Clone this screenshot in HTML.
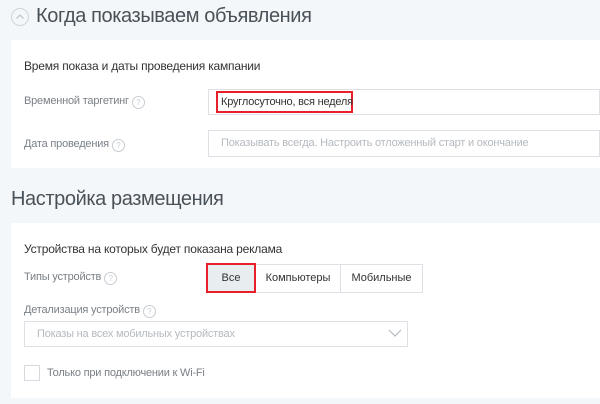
<!DOCTYPE html>
<html><head><meta charset="utf-8"><style>
body{margin:0;width:600px;height:404px;background:#f4f7f9;font-family:"Liberation Sans",sans-serif;position:relative;overflow:hidden;color:#333}
.a{position:absolute;white-space:nowrap}
.panel{position:absolute;left:11px;right:0;background:#fff}
.h{font-size:20px;color:#4a5259;letter-spacing:-0.4px}
.lbl{font-size:11px;color:#7a8087;letter-spacing:-0.2px}
.q{display:inline-block;width:11px;height:11px;border:1px solid #c8cdd2;border-radius:50%;font-size:8px;line-height:11px;text-align:center;color:#c8cdd2;margin-left:3px;vertical-align:-1px;letter-spacing:0}
.inp{position:absolute;border:1px solid #dde1e5;background:#fff;font-size:11px;color:#b5babf;box-sizing:border-box;padding-left:12px;letter-spacing:-0.2px}
.btn{position:absolute;top:264px;height:29px;border:1px solid #dde1e5;box-sizing:border-box;font-size:11px;color:#333;text-align:center;line-height:27px;background:#fff}
</style></head><body>
<div class="a" style="left:11px;top:8px;width:16px;height:16px;border:1px solid #d0d4d8;border-radius:50%"></div>
<svg class="a" style="left:11px;top:8px" width="18" height="18"><path d="M5.5 10.5 L9 7 L12.5 10.5" fill="none" stroke="#c5c9cd" stroke-width="1.3"/></svg>
<div class="a h" style="left:36px;top:5px;font-size:20px">Когда показываем объявления</div>
<div class="panel" style="top:40px;height:128px"></div>
<div class="a" style="left:24px;top:59px;font-size:12px;color:#333;letter-spacing:-0.2px">Время показа и даты проведения кампании</div>
<div class="a lbl" style="left:24px;top:95px">Временной таргетинг<span class="q">?</span></div>
<div class="inp" style="left:208px;top:89px;width:392px;height:26px"></div>
<div class="a" style="left:216px;top:91px;width:137px;height:22px;border:2px solid #e8202a;box-sizing:border-box;font-size:11px;color:#333;line-height:18px;padding-left:3px;letter-spacing:-0.2px">Круглосуточно, вся неделя</div>
<div class="a lbl" style="left:24px;top:138px">Дата проведения<span class="q">?</span></div>
<div class="inp" style="left:208px;top:130px;width:392px;height:27px;line-height:25px">Показывать всегда. Настроить отложенный старт и окончание</div>
<div class="a h" style="left:11px;top:188px">Настройка размещения</div>
<div class="panel" style="top:223px;height:175px"></div>
<div class="a" style="left:24px;top:242px;font-size:12px;color:#333;letter-spacing:-0.2px">Устройства на которых будет показана реклама</div>
<div class="a lbl" style="left:24px;top:271px">Типы устройств<span class="q">?</span></div>
<div class="btn" style="left:255px;width:86px">Компьютеры</div>
<div class="btn" style="left:340px;width:83px">Мобильные</div>
<div class="btn" style="left:206px;width:50px;height:30px;top:263px;background:#e8edf0;border:2px solid #e8202a;line-height:26px">Все</div>
<div class="a lbl" style="left:24px;top:304px">Детализация устройств<span class="q">?</span></div>
<div class="inp" style="left:24px;top:321px;width:384px;height:26px;line-height:24px">Показы на всех мобильных устройствах</div>
<svg class="a" style="left:388px;top:328px" width="14" height="10"><path d="M1 2 L7 8 L13 2" fill="none" stroke="#b5babf" stroke-width="1.2"/></svg>
<div class="a" style="left:24px;top:365px;width:16px;height:16px;border:1px solid #d5d9dd;box-sizing:border-box"></div>
<div class="a lbl" style="left:47px;top:367px">Только при подключении к Wi-Fi</div>
</body></html>
